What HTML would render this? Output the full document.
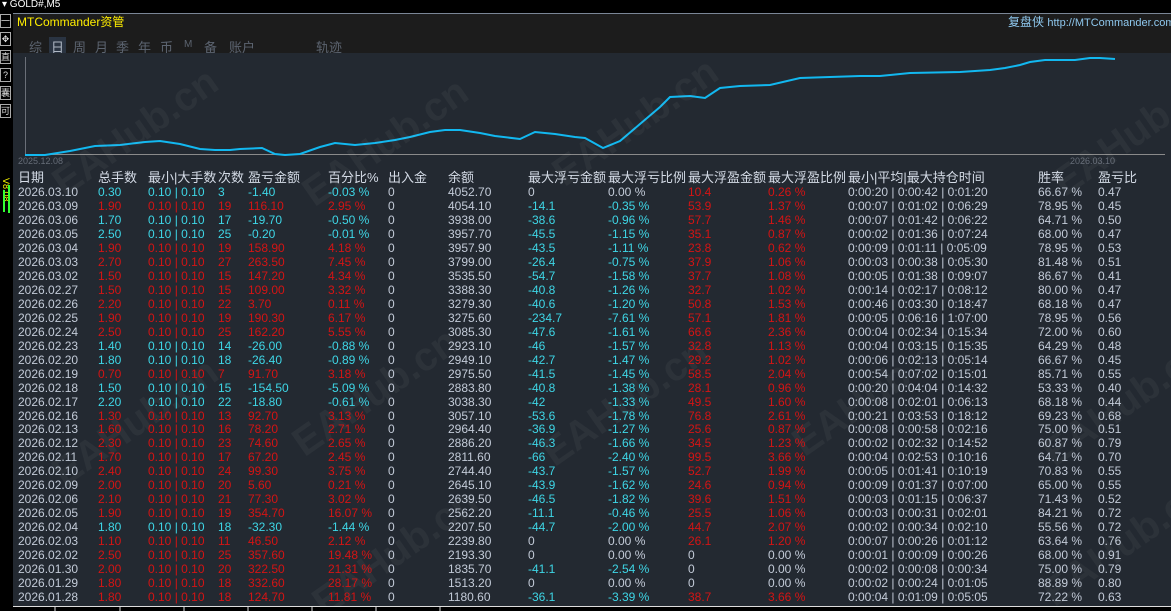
<!DOCTYPE html>
<html style="width:1171px;height:611px;overflow:hidden"><head><meta charset="utf-8"><style>
*{margin:0;padding:0;box-sizing:border-box}
body{width:1171px;height:611px;background:#000;overflow:hidden;position:relative;font-family:"Liberation Sans","Noto Sans CJK SC",sans-serif;font-size:12px;color:#c3cbd8}
.top{position:absolute;left:0;top:0;width:1171px;height:12px;background:#000;color:#fff;font-size:10px;line-height:10px;padding-left:2px}
.side{position:absolute;left:0;top:12px;width:12px;height:599px;background:#000}
.side div{width:11px;height:14px;border:1px solid #aaa;margin:2px 0 4px 0;color:#ddd;font-size:9px;line-height:12px;text-align:center}
.hdr{position:absolute;left:13px;top:13px;width:1158px;height:40px;background:#1c1c1c;border-top:1px solid #7a8696}
.panel{position:absolute;left:13px;top:53px;width:1158px;height:554px;background:#232931}
.t{position:absolute;white-space:nowrap;line-height:14px}
.row{position:absolute;left:13px;width:1158px;height:14px}
.row span{position:absolute;top:0;line-height:14px;white-space:nowrap}
.c{color:#3ed6e6}.r{color:#d41414}
.a{left:5px}.b{left:85px}.d{left:135px}.e{left:205px}.f{left:235px}.g{left:315px}.h{left:375px}.i{left:435px}.j{left:515px}.k{left:595px}.l{left:675px}.m{left:755px}.n{left:835px}.o{left:1025px}.p{left:1085px}
.tab{position:absolute;top:37px;color:#5c6470;font-size:13px}
.wmw{position:absolute;left:0;top:0;width:1171px;height:611px;overflow:hidden}
.wm{position:absolute;color:rgba(255,255,255,0.045);font-size:40px;font-weight:bold;transform:rotate(-35deg);white-space:nowrap}
.bot{position:absolute;left:13px;top:607px;width:1158px;height:4px;background:#000}
</style></head><body>
<div class="top">▾ GOLD#,M5</div>
<div class="side"><div>一</div><div>✥</div><div>直</div><div>?</div><div>囊</div><div>可</div></div>
<div style="position:absolute;left:1px;top:178px;color:#ff0;font-size:9px;writing-mode:vertical-rl;">V8.08</div>
<div style="position:absolute;left:3px;top:190px;width:2px;height:22px;background:#3f3"></div>
<div style="position:absolute;left:8px;top:185px;width:2px;height:28px;background:#3f3"></div>
<div class="hdr"></div>
<div class="t" style="left:17px;top:15px;color:#ffee00;font-size:12px">MTCommander资管</div>
<div class="t" style="left:1008px;top:15px;color:#8fc8ee;font-size:12px">复盘侠 <span style="font-size:11px">http://MTCommander.com</span></div>
<span class="tab" style="left:29px">综</span>
<span class="tab" style="left:49px;background:#2a3442;color:#b0b8c4;padding:0 2px">日</span>
<span class="tab" style="left:73px">周</span><span class="tab" style="left:95px">月</span><span class="tab" style="left:116px">季</span><span class="tab" style="left:138px">年</span><span class="tab" style="left:160px">币</span><span class="tab" style="left:184px;font-size:10px;top:39px">M</span><span class="tab" style="left:204px">备</span><span class="tab" style="left:229px">账户</span><span class="tab" style="left:316px">轨迹</span>
<div class="panel"></div>
<svg style="position:absolute;left:0;top:0" width="1171" height="170">
<line x1="25.5" y1="57" x2="25.5" y2="155" stroke="#6a6f78"/>
<line x1="25" y1="154.5" x2="1165" y2="154.5" stroke="#8a8a8a"/>
<polyline fill="none" stroke="#12b8f0" stroke-width="2" points="25,155 45,155 70,151 95,146 120,145 145,142 160,141 180,144 200,149 215,150 230,150 240,149 262,148 275,154 285,155 300,154 320,147 335,143 355,145 375,143 395,140 410,137 430,132 445,130 460,130 480,133 495,136 520,139 535,132 555,134 575,137 585,138 603,148 620,141 640,124 660,107 670,97 690,96 705,98 720,88 740,86 770,85 800,78 830,77 860,76 880,76 910,73 960,72 990,70 1005,68 1020,65 1030,62 1045,60 1075,60 1090,58 1100,58 1115,59"/>
<text x="18" y="164" fill="#666d78" font-size="9" font-family="Liberation Sans">2025.12.08</text>
<text x="1070" y="164" fill="#666d78" font-size="9" font-family="Liberation Sans">2026.03.10</text>
</svg>
<div class="wmw">
<div class="wm" style="left:40px;top:110px">EAHub.cn</div>
<div class="wm" style="left:290px;top:120px">EAHub.cn</div>
<div class="wm" style="left:540px;top:100px">EAHub.cn</div>
<div class="wm" style="left:1040px;top:110px">EAHub.cn</div>
<div class="wm" style="left:40px;top:400px">EAHub.cn</div>
<div class="wm" style="left:280px;top:370px">EAHub.cn</div>
<div class="wm" style="left:530px;top:380px">EAHub.cn</div>
<div class="wm" style="left:780px;top:370px">EAHub.cn</div>
<div class="wm" style="left:1030px;top:380px">EAHub.cn</div>
<div class="wm" style="left:300px;top:530px">EAHub.cn</div>
<div class="wm" style="left:1030px;top:520px">EAHub.cn</div>
</div>
<div class="row" style="top:171px;color:#d4dbe6;font-size:13px"><span class="a">日期</span><span class="b">总手数</span><span class="d">最小|大手数</span><span class="e">次数</span><span class="f">盈亏金额</span><span class="g">百分比%</span><span class="h">出入金</span><span class="i">余额</span><span class="j">最大浮亏金额</span><span class="k">最大浮亏比例</span><span class="l">最大浮盈金额</span><span class="m">最大浮盈比例</span><span class="n">最小|平均|最大持仓时间</span><span class="o">胜率</span><span class="p">盈亏比</span></div>
<div id="rows"></div>
<div class="bot"></div>
<svg style="position:absolute;left:0;top:606px" width="1171" height="5"><g stroke="#ddd"><line x1="55" y1="0" x2="55" y2="5"/><line x1="120" y1="0" x2="120" y2="5"/><line x1="184" y1="0" x2="184" y2="5"/><line x1="248" y1="0" x2="248" y2="5"/><line x1="312" y1="0" x2="312" y2="5"/><line x1="376" y1="0" x2="376" y2="5"/><line x1="440" y1="0" x2="440" y2="5"/><line x1="13" y1="0.5" x2="1171" y2="0.5"/></g></svg>
<script>
const D=`03.10|0.30|c|3|-1.40|-0.03|4052.70|0|0.00|10.4|0.26|00:20|00:42|01:20|66.67|0.47
03.09|1.90|r|19|116.10|2.95|4054.10|-14.1|-0.35|53.9|1.37|00:07|01:02|06:29|78.95|0.45
03.06|1.70|c|17|-19.70|-0.50|3938.00|-38.6|-0.96|57.7|1.46|00:07|01:42|06:22|64.71|0.50
03.05|2.50|c|25|-0.20|-0.01|3957.70|-45.5|-1.15|35.1|0.87|00:02|01:36|07:24|68.00|0.47
03.04|1.90|r|19|158.90|4.18|3957.90|-43.5|-1.11|23.8|0.62|00:09|01:11|05:09|78.95|0.53
03.03|2.70|r|27|263.50|7.45|3799.00|-26.4|-0.75|37.9|1.06|00:03|00:38|05:30|81.48|0.51
03.02|1.50|r|15|147.20|4.34|3535.50|-54.7|-1.58|37.7|1.08|00:05|01:38|09:07|86.67|0.41
02.27|1.50|r|15|109.00|3.32|3388.30|-40.8|-1.26|32.7|1.02|00:14|02:17|08:12|80.00|0.47
02.26|2.20|r|22|3.70|0.11|3279.30|-40.6|-1.20|50.8|1.53|00:46|03:30|18:47|68.18|0.47
02.25|1.90|r|19|190.30|6.17|3275.60|-234.7|-7.61|57.1|1.81|00:05|06:16|1:07:00|78.95|0.56
02.24|2.50|r|25|162.20|5.55|3085.30|-47.6|-1.61|66.6|2.36|00:04|02:34|15:34|72.00|0.60
02.23|1.40|c|14|-26.00|-0.88|2923.10|-46|-1.57|32.8|1.13|00:04|03:15|15:35|64.29|0.48
02.20|1.80|c|18|-26.40|-0.89|2949.10|-42.7|-1.47|29.2|1.02|00:06|02:13|05:14|66.67|0.45
02.19|0.70|r|7|91.70|3.18|2975.50|-41.5|-1.45|58.5|2.04|00:54|07:02|15:01|85.71|0.55
02.18|1.50|c|15|-154.50|-5.09|2883.80|-40.8|-1.38|28.1|0.96|00:20|04:04|14:32|53.33|0.40
02.17|2.20|c|22|-18.80|-0.61|3038.30|-42|-1.33|49.5|1.60|00:08|02:01|06:13|68.18|0.44
02.16|1.30|r|13|92.70|3.13|3057.10|-53.6|-1.78|76.8|2.61|00:21|03:53|18:12|69.23|0.68
02.13|1.60|r|16|78.20|2.71|2964.40|-36.9|-1.27|25.6|0.87|00:08|00:58|02:16|75.00|0.51
02.12|2.30|r|23|74.60|2.65|2886.20|-46.3|-1.66|34.5|1.23|00:02|02:32|14:52|60.87|0.79
02.11|1.70|r|17|67.20|2.45|2811.60|-66|-2.40|99.5|3.66|00:04|02:53|10:16|64.71|0.70
02.10|2.40|r|24|99.30|3.75|2744.40|-43.7|-1.57|52.7|1.99|00:05|01:41|10:19|70.83|0.55
02.09|2.00|r|20|5.60|0.21|2645.10|-43.9|-1.62|24.6|0.94|00:09|01:37|07:00|65.00|0.55
02.06|2.10|r|21|77.30|3.02|2639.50|-46.5|-1.82|39.6|1.51|00:03|01:15|06:37|71.43|0.52
02.05|1.90|r|19|354.70|16.07|2562.20|-11.1|-0.46|25.5|1.06|00:03|00:31|02:01|84.21|0.72
02.04|1.80|c|18|-32.30|-1.44|2207.50|-44.7|-2.00|44.7|2.07|00:02|00:34|02:10|55.56|0.72
02.03|1.10|r|11|46.50|2.12|2239.80|0|0.00|26.1|1.20|00:07|00:26|01:12|63.64|0.76
02.02|2.50|r|25|357.60|19.48|2193.30|0|0.00|0|0.00|00:01|00:09|00:26|68.00|0.91
01.30|2.00|r|20|322.50|21.31|1835.70|-41.1|-2.54|0|0.00|00:02|00:08|00:34|75.00|0.79
01.29|1.80|r|18|332.60|28.17|1513.20|0|0.00|0|0.00|00:02|00:24|01:05|88.89|0.80
01.28|1.80|r|18|124.70|11.81|1180.60|-36.1|-3.39|38.7|3.66|00:04|01:09|05:05|72.22|0.63`;
let h='';D.split('\n').forEach((l,i)=>{const v=l.split('|');const c=v[2];const y=185+i*13.97;
const fc=v[7]==='0'?'':'c';const gc=v[9]==='0'?'':'r';
const t=x=>x.length>5?x:'0:'+x;
h+=`<div class="row" style="top:${y}px"><span class="a">2026.${v[0]}</span><span class="b ${c}">${v[1]}</span><span class="d ${c}">0.10 | 0.10</span><span class="e ${c}">${v[3]}</span><span class="f ${c}">${v[4]}</span><span class="g ${c}">${v[5]} %</span><span class="h">0</span><span class="i">${v[6]}</span><span class="j ${fc}">${v[7]}</span><span class="k ${fc}">${v[8]} %</span><span class="l ${gc}">${v[9]}</span><span class="m ${gc}">${v[10]} %</span><span class="n">${t(v[11])} | ${t(v[12])} | ${t(v[13])}</span><span class="o">${v[14]} %</span><span class="p">${v[15]}</span></div>`;});
document.getElementById('rows').innerHTML=h;
</script>
</body></html>
